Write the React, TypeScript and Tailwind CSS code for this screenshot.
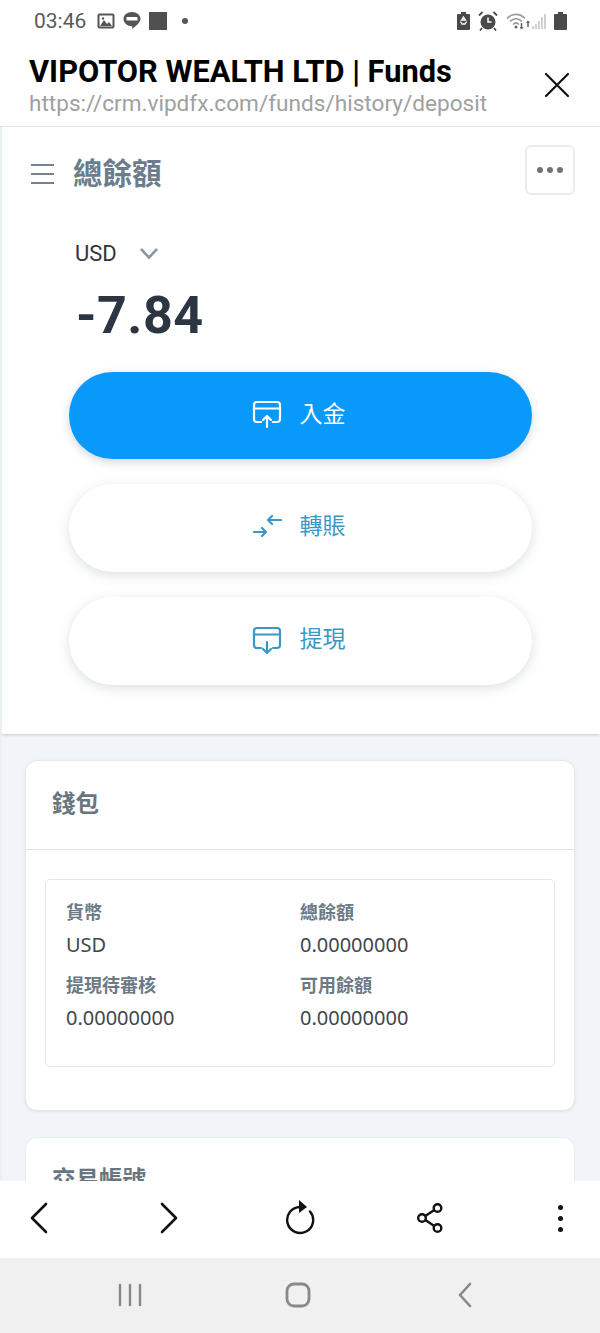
const sans = "font-['Roboto','Noto_Sans_CJK_TC',sans-serif]";

function StatusBar() {
  return (
    <div className="flex h-[42px] shrink-0 items-center pl-[34px] pr-[33px] text-[#5a5a5a]">
      <span className="w-[54px] text-[21px] font-normal leading-none">03:46</span>
      <svg width="18" height="16" viewBox="0 0 18 16" className="ml-[9px]">
        <rect width="17" height="15" x="0.5" y="0.5" rx="2" fill="#555" />
        <rect width="13" height="11" x="2.5" y="2.5" fill="#fff" />
        <path d="M3 13l4-6 3 4 2-2 3 4z" fill="#555" />
        <circle cx="6" cy="5.5" r="1.2" fill="#555" />
      </svg>
      <svg width="18" height="20" viewBox="0 0 18 20" className="ml-[8px]">
        <path d="M9 1c4.700 0 8.500 3 8.500 6.800 0 3.600-4.800 7.500-7.600 9.700-.6.500-.9 0-.8-.5l.1-1.700C4.300 15.200.5 12 .5 7.800.5 4 4.300 1 9 1z" fill="#555" />
        <rect x="3.500" y="6" width="11" height="3.500" rx="0.500" fill="#fff" />
      </svg>
      <div className="ml-[8px] h-[18px] w-[18px] bg-[#505050]" />
      <div className="ml-[15px] h-[6px] w-[6px] rounded-full bg-[#555]" />
      <div className="flex-1" />
      <svg width="13" height="18" viewBox="0 0 13 18">
        <path d="M4 0h5v2h3a1 1 0 0 1 1 1v14a1 1 0 0 1-1 1H1a1 1 0 0 1-1-1V3a1 1 0 0 1 1-1h3z" fill="#4a4a4a" />
        <path d="M6.500 5l2 3H4.500zM3.500 9.500l1.500 2.500h3l1.500-2.500" fill="none" stroke="#fff" strokeWidth="1.300" />
      </svg>
      <svg width="20" height="20" viewBox="0 0 20 20" className="ml-[8px]">
        <circle cx="10" cy="11" r="7.500" fill="#4a4a4a" />
        <path d="M10 6.500V11h3.500" fill="none" stroke="#fff" strokeWidth="1.500" />
        <path d="M1 4.500L4.500 1M19 4.500L15.500 1M4 17l-2 2.500M16 17l2 2.500" stroke="#4a4a4a" strokeWidth="1.800" />
      </svg>
      <svg width="24" height="18" viewBox="0 0 24 18" className="ml-[8px]">
        <path d="M1 6.500C6 1 14 1 19 6.500M4 9.500c3.500-3.700 8.500-3.700 12 0M7 12.500c1.800-1.800 4.200-1.800 6 0" fill="none" stroke="#9a9a9a" strokeWidth="1.700" />
        <circle cx="10" cy="15" r="1.500" fill="#666" />
        <path d="M15.500 11v6M22 9v6" stroke="#666" strokeWidth="1.500" />
        <path d="M13.500 15l2 2.500 2-2.500zM20 11l2-2.500 2 2.500z" fill="#666" />
      </svg>
      <svg width="16" height="18" viewBox="0 0 16 18" className="ml-[2px]">
        <path d="M1 17v-3M4 17v-5M7 17V9M10 17V5M13 17V2" stroke="#b8b8b8" strokeWidth="1.300" />
      </svg>
      <svg width="13" height="18" viewBox="0 0 13 18" className="ml-[6px]">
        <path d="M4 0h5v2h3a1 1 0 0 1 1 1v14a1 1 0 0 1-1 1H1a1 1 0 0 1-1-1V3a1 1 0 0 1 1-1h3z" fill="#4a4a4a" />
      </svg>
    </div>
  );
}

function Header() {
  return (
    <div className="flex h-[85px] shrink-0 items-start justify-between border-b border-[#e4e4e4] bg-white pl-[29px] pr-[30px]">
      <div className="pt-[10px]">
        <div className="text-[30.800px] font-bold leading-[39px] text-black">VIPOTOR WEALTH LTD | Funds</div>
        <div className="text-[22.600px] font-normal leading-[25px] text-[#a0a0a0]">https://crm.vipdfx.com/funds/history/deposit</div>
      </div>
      <svg width="26" height="26" viewBox="0 0 26 26" className="mt-[30px]">
        <path d="M2 2l22 22M24 2L2 24" stroke="#111" strokeWidth="2.200" strokeLinecap="round" />
      </svg>
    </div>
  );
}

function CardUpIcon({ color }: { color: string }) {
  return (
    <svg width="30" height="30" viewBox="0 0 30 30" fill="none" stroke={color} strokeWidth="2.200" strokeLinecap="round" strokeLinejoin="round">
      <path d="M9 23H5a3 3 0 0 1-3-3V6a3 3 0 0 1 3-3h20a3 3 0 0 1 3 3v14a3 3 0 0 1-3 3h-4" />
      <path d="M2 9.500h26" />
      <path d="M15 28V17.500M11 21l4-4 4 4" />
    </svg>
  );
}

function CardDownIcon({ color }: { color: string }) {
  return (
    <svg width="30" height="30" viewBox="0 0 30 30" fill="none" stroke={color} strokeWidth="2.200" strokeLinecap="round" strokeLinejoin="round">
      <path d="M9 23H5a3 3 0 0 1-3-3V6a3 3 0 0 1 3-3h20a3 3 0 0 1 3 3v14a3 3 0 0 1-3 3h-4" />
      <path d="M2 9.500h26" />
      <path d="M15 17v10.500M11 24l4 4 4-4" />
    </svg>
  );
}

function TransferIcon({ color }: { color: string }) {
  return (
    <svg width="30" height="30" viewBox="0 0 30 30" fill="none" stroke={color} strokeWidth="2.200" strokeLinecap="round" strokeLinejoin="round">
      <path d="M2 20h12M10 16l4 4-4 4" />
      <path d="M29 9H16M20 5l-4 4 4 4" transform="translate(0 -1)" />
    </svg>
  );
}

function ActionButton({ label, primary, children }: { label: string; primary?: boolean; children: React.ReactNode }) {
  return (
    <button
      className={
        primary
          ? "flex h-[87px] w-full items-center justify-center gap-[18px] rounded-full bg-[#0899fb] pb-[3px] pr-[4px] text-[23px] text-white shadow-[0_3px_10px_rgba(90,110,130,0.28)]"
          : "flex h-[88px] w-full items-center justify-center gap-[18px] rounded-full bg-white pb-[3px] pr-[4px] text-[23px] text-[#3b98c4] shadow-[0_3px_12px_rgba(90,110,130,0.22)]"
      }
    >
      {children}
      <span className="leading-none">{label}</span>
    </button>
  );
}

function BalanceCard() {
  return (
    <div className="shrink-0 bg-white pb-[49px] shadow-[0_1px_3px_rgba(100,110,120,0.3)]">
      <div className="flex items-start justify-between pl-[29px] pr-[25px] pt-[18px]">
        <div className="flex items-center gap-[19px] pt-[10px]">
          <div className="flex w-[23px] flex-col gap-[7px]">
            <div className="h-[2px] bg-[#76838d]" />
            <div className="h-[2px] bg-[#76838d]" />
            <div className="h-[2px] bg-[#76838d]" />
          </div>
          <span className="text-[29.500px] font-bold leading-[38px] text-[#6b7d8c]">總餘額</span>
        </div>
        <div className="flex h-[50px] w-[50px] items-center justify-center gap-[4px] rounded-[6px] border-2 border-[#ececec]">
          <div className="h-[6px] w-[6px] rounded-full bg-[#6d7379]" />
          <div className="h-[6px] w-[6px] rounded-full bg-[#6d7379]" />
          <div className="h-[6px] w-[6px] rounded-full bg-[#6d7379]" />
        </div>
      </div>
      <div className="mt-[45px] flex items-center gap-[22px] pl-[73px]">
        <span className="text-[22px] leading-[28px] text-[#30363c]">USD</span>
        <svg width="20" height="14" viewBox="0 0 20 14" fill="none" stroke="#8c979e" strokeWidth="2.600">
          <path d="M2 2l8 8.500L18 2" />
        </svg>
      </div>
      <div className="mt-[18px] pl-[74px] text-[52px] font-bold leading-[60px] tracking-[0.5px] text-[#2c3642]">-7.84</div>
      <div className="mt-[26px] flex flex-col gap-[25px] pl-[67px] pr-[68px]">
        <ActionButton label="入金" primary>
          <CardUpIcon color="#ffffff" />
        </ActionButton>
        <ActionButton label="轉賬">
          <TransferIcon color="#3b98c4" />
        </ActionButton>
        <ActionButton label="提現">
          <CardDownIcon color="#3b98c4" />
        </ActionButton>
      </div>
    </div>
  );
}

function Field({ label, value }: { label: string; value: string }) {
  return (
    <div className="h-[73px]">
      <div className="text-[18px] font-bold leading-[26px] text-[#6c7a86]">{label}</div>
      <div className="mt-[6px] font-['Noto_Sans','Noto_Sans_CJK_TC',sans-serif] text-[20px] leading-[26px] text-[#3f464c]">{value}</div>
    </div>
  );
}

function WalletCard() {
  return (
    <div className="shrink-0 rounded-[12px] border border-[#e6eaee] bg-white pb-[43px] shadow-[0_1px_3px_rgba(100,110,120,0.12)]">
      <div className="flex h-[89px] items-center border-b border-[#dfe2e5] pl-[26px] text-[23.500px] font-bold text-[#687680]">
        <span>錢包</span>
      </div>
      <div className="mx-[19px] mt-[29px] h-[188px] rounded-[5px] border border-[#e4e7ea] px-[20px] pt-[20px]">
        <div className="grid grid-cols-2">
          <Field label="貨幣" value="USD" />
          <Field label="總餘額" value="0.00000000" />
          <Field label="提現待審核" value="0.00000000" />
          <Field label="可用餘額" value="0.00000000" />
        </div>
      </div>
    </div>
  );
}

function TradeCard() {
  return (
    <div className="shrink-0 rounded-[12px] border border-[#e6eaee] bg-white pl-[26px] pt-[24px]">
      <span className="text-[23.500px] font-bold leading-[36px] text-[#687680]">交易帳號</span>
    </div>
  );
}

function Toolbar() {
  return (
    <div className="z-10 flex h-[77px] shrink-0 items-center justify-between bg-white pb-[3px] pl-[24px] pr-[25px]">
      <div className="flex w-[30px] justify-center">
        <svg width="22" height="32" viewBox="0 0 22 32" fill="none" stroke="#111" strokeWidth="2.600" strokeLinecap="round" strokeLinejoin="round">
          <path d="M18 2L4 16l14 14" />
        </svg>
      </div>
      <div className="flex w-[30px] justify-center">
        <svg width="22" height="32" viewBox="0 0 22 32" fill="none" stroke="#111" strokeWidth="2.600" strokeLinecap="round" strokeLinejoin="round">
          <path d="M4 2l14 14L4 30" />
        </svg>
      </div>
      <div className="flex w-[30px] justify-center">
        <svg width="32" height="36" viewBox="0 0 32 36" fill="none" className="-mt-[2px] shrink-0">
          <path d="M16 8A13 13 0 1 0 26 12.500" stroke="#111" strokeWidth="2.400" strokeLinecap="round" />
          <path d="M15 1l8 7-8 6z" fill="#111" />
        </svg>
      </div>
      <div className="flex w-[30px] justify-center">
        <svg width="28" height="32" viewBox="0 0 28 32" fill="none" stroke="#111" strokeWidth="2.400">
          <circle cx="21.500" cy="6" r="3.800" />
          <circle cx="6" cy="16" r="3.800" />
          <circle cx="21.500" cy="26" r="3.800" />
          <path d="M9.300 14l9-6M9.300 18l9 6" />
        </svg>
      </div>
      <div className="flex w-[30px] flex-col items-center gap-[6px]">
        <div className="h-[5px] w-[5px] rounded-full bg-[#111]" />
        <div className="h-[5px] w-[5px] rounded-full bg-[#111]" />
        <div className="h-[5px] w-[5px] rounded-full bg-[#111]" />
      </div>
    </div>
  );
}

function NavBar() {
  return (
    <div className="z-10 flex h-[75px] shrink-0 items-center bg-[#f0f0f0] pb-[1px] pl-[118px]">
      <svg width="24" height="24" viewBox="0 0 24 24" fill="none" stroke="#888" strokeWidth="2.400" strokeLinecap="round">
        <path d="M2 2v20M12 2v20M22 2v20" />
      </svg>
      <svg width="26" height="26" viewBox="0 0 26 26" fill="none" stroke="#888" strokeWidth="2.800" className="ml-[143px]">
        <rect x="2" y="2" width="22" height="22" rx="7" />
      </svg>
      <svg width="16" height="26" viewBox="0 0 16 26" fill="none" stroke="#888" strokeWidth="2.600" strokeLinecap="round" strokeLinejoin="round" className="ml-[146px]">
        <path d="M13 2L3 13l10 11" />
      </svg>
    </div>
  );
}

export default function App() {
  return (
    <div className={`${sans} flex h-[1333px] w-[600px] flex-col overflow-hidden bg-white`}>
      <StatusBar />
      <Header />
      <div className="flex min-h-0 flex-1 flex-col overflow-hidden border-l-2 border-[#eceff2] bg-[#f1f5f9]">
        <BalanceCard />
        <div className="flex flex-col gap-[26px] pl-[23px] pr-[25px] pt-[26px]">
          <WalletCard />
          <TradeCard />
        </div>
      </div>
      <Toolbar />
      <NavBar />
    </div>
  );
}
